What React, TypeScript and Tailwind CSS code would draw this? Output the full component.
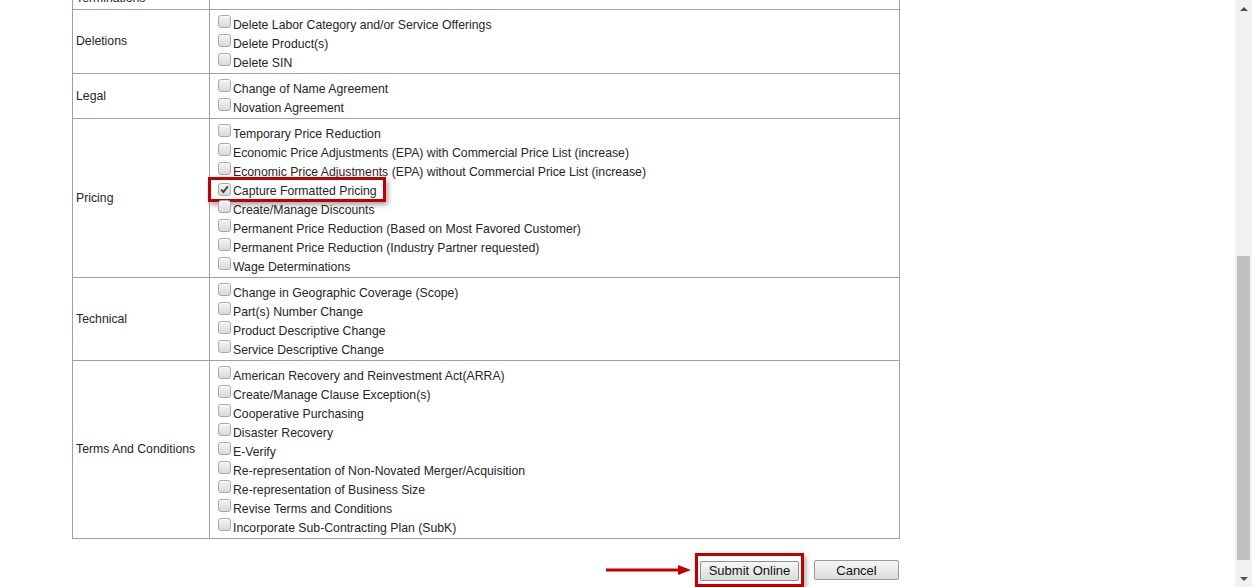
import React from 'react';

type Section = { label: string; items: string[] };

const sections: Section[] = [
  { label: 'Deletions', items: ['Delete Labor Category and/or Service Offerings', 'Delete Product(s)', 'Delete SIN'] },
  { label: 'Legal', items: ['Change of Name Agreement', 'Novation Agreement'] },
  {
    label: 'Pricing',
    items: [
      'Temporary Price Reduction',
      'Economic Price Adjustments (EPA) with Commercial Price List (increase)',
      'Economic Price Adjustments (EPA) without Commercial Price List (increase)',
      'Capture Formatted Pricing',
      'Create/Manage Discounts',
      'Permanent Price Reduction (Based on Most Favored Customer)',
      'Permanent Price Reduction (Industry Partner requested)',
      'Wage Determinations',
    ],
  },
  {
    label: 'Technical',
    items: ['Change in Geographic Coverage (Scope)', 'Part(s) Number Change', 'Product Descriptive Change', 'Service Descriptive Change'],
  },
  {
    label: 'Terms And Conditions',
    items: [
      'American Recovery and Reinvestment Act(ARRA)',
      'Create/Manage Clause Exception(s)',
      'Cooperative Purchasing',
      'Disaster Recovery',
      'E-Verify',
      'Re-representation of Non-Novated Merger/Acquisition',
      'Re-representation of Business Size',
      'Revise Terms and Conditions',
      'Incorporate Sub-Contracting Plan (SubK)',
    ],
  },
];

function Checkbox({ checked }: { checked?: boolean }) {
  return (
    <span className="relative inline-flex h-[13px] w-[13px] shrink-0 items-center justify-center rounded-[3px] border border-[#a9a9a9] bg-gradient-to-b from-[#f4f4f4] to-[#d9d9d9] shadow-[inset_0_1px_0_#fff]">
      {checked && (
        <svg width="9" height="9" viewBox="0 0 9 9">
          <path d="M1.2 4.6 L3.4 7 L7.8 1.4" fill="none" stroke="#3a3a3a" strokeWidth="1.8" />
        </svg>
      )}
    </span>
  );
}

function Option({ text }: { text: string }) {
  const highlighted = text === 'Capture Formatted Pricing';
  return (
    <div className="relative flex h-[19px] items-center">
      {highlighted && (
        <span className="absolute left-[-10px] top-[-4px] h-[25px] w-[178px] border-[3px] border-[#c00000] shadow-[2px_3px_5px_rgba(0,0,0,0.35)]" />
      )}
      <span className="-mt-[3px] mr-[2px]">
        <Checkbox checked={highlighted} />
      </span>
      <span className="pt-[1px] text-[12.25px] text-[#262626]">{text}</span>
    </div>
  );
}

function Row({ section }: { section: Section }) {
  return (
    <div className="flex border-b border-[#a0a0a0]">
      <div className="flex w-[137px] shrink-0 items-center border-r border-[#a0a0a0] pl-[3px] text-[12.25px] text-[#262626]">
        {section.label}
      </div>
      <div className="flex-1 pb-[1px] pl-[8px] pt-[5px]">
        {section.items.map((item) => (
          <Option key={item} text={item} />
        ))}
      </div>
    </div>
  );
}

export default function App() {
  return (
    <div className="flex h-[587px] w-[1252px] overflow-hidden bg-white font-['Liberation_Sans',Arial,sans-serif]">
      <div className="flex-1 pl-[72px]">
        {/* form table, scrolled so the first row is cut off */}
        <div className="-mt-[16px] w-[828px] border-l border-r border-[#a0a0a0]">
          <div className="flex h-[26px] border-b border-[#a0a0a0]">
            <div className="flex w-[137px] shrink-0 items-center border-r border-[#a0a0a0] pl-[3px] pt-[4px] text-[12.25px] text-[#262626]">
              Terminations
            </div>
            <div className="flex-1" />
          </div>
          {sections.map((s) => (
            <Row key={s.label} section={s} />
          ))}
        </div>

        {/* actions */}
        <div className="mt-[14px] flex w-[827px] items-center justify-end">
          <svg width="86" height="12" viewBox="0 0 86 12" className="mr-[3px]">
            <line x1="0" y1="6" x2="74" y2="6" stroke="#c00000" strokeWidth="3" />
            <path d="M72 1 L85 6 L72 11 Z" fill="#c00000" />
          </svg>
          <div className="border-[3px] border-[#c00000] p-[2px] shadow-[2px_3px_5px_rgba(0,0,0,0.35)]">
            <button className="h-[20px] w-[99px] rounded-[2px] border border-[#8f8f8f] bg-gradient-to-b from-[#f6f6f6] to-[#dcdcdc] text-[13px] leading-none text-[#111]">
              Submit Online
            </button>
          </div>
          <button className="ml-[10px] h-[20px] w-[85px] rounded-[2px] border border-[#9a9a9a] bg-gradient-to-b from-[#f6f6f6] to-[#dcdcdc] text-[13px] leading-none text-[#111]">
            Cancel
          </button>
        </div>
      </div>

      {/* browser scrollbar */}
      <div className="flex w-[17px] flex-col items-center bg-[#f1f1f1]">
        <div className="flex h-[17px] items-center justify-center">
          <span className="h-0 w-0 border-x-[4px] border-b-[4px] border-x-transparent border-b-[#505050]" />
        </div>
        <div className="flex w-full flex-1 flex-col px-[2px]">
          <div className="h-[239px]" />
          <div className="h-[304px] bg-[#c1c1c1]" />
        </div>
        <div className="flex h-[17px] items-center justify-center">
          <span className="h-0 w-0 border-x-[4px] border-t-[4px] border-x-transparent border-t-[#505050]" />
        </div>
      </div>
    </div>
  );
}
